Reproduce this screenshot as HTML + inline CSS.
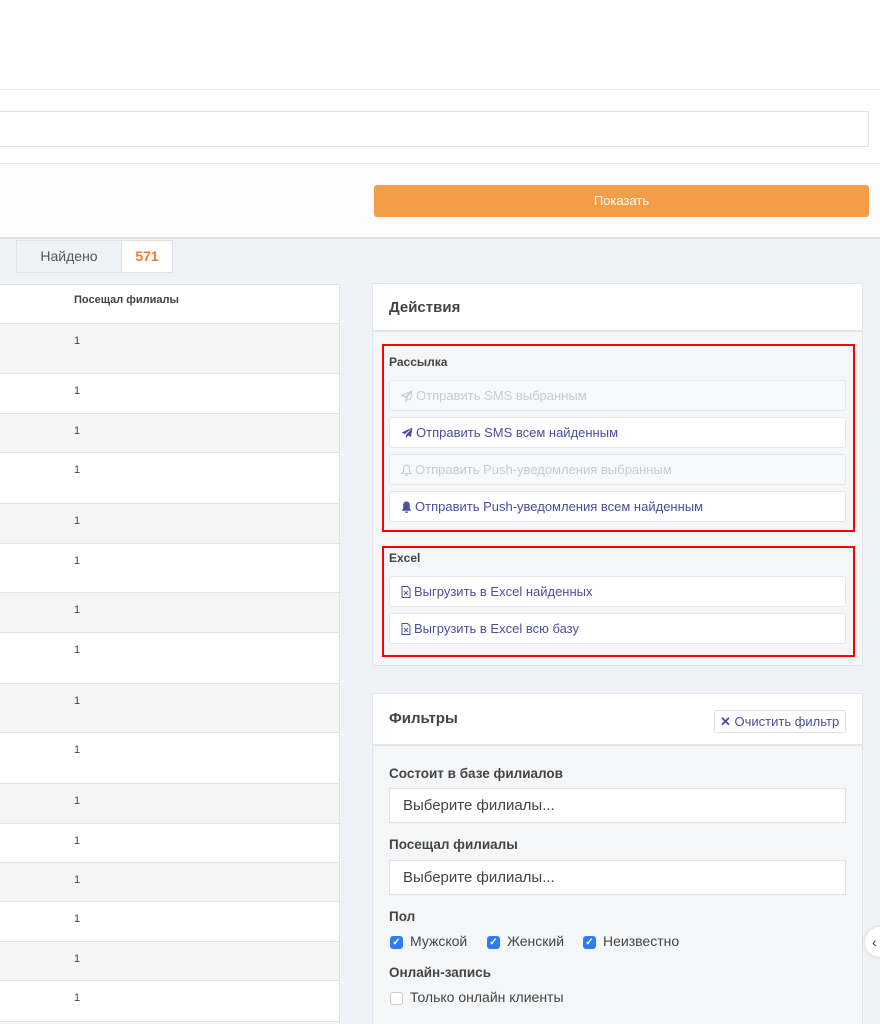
<!DOCTYPE html>
<html><head><meta charset="utf-8"><style>
*{box-sizing:border-box;margin:0;padding:0}
html,body{width:880px;height:1024px;overflow:hidden}
body{background:#eff2f7;font-family:"Liberation Sans",sans-serif;position:relative;color:#444}
.a{position:absolute}
.btn{position:absolute;left:389px;width:457px;height:31px;border:1px solid #e3e6ea;border-radius:3px;background:#fff;color:#4a4f9e;font-size:13px;padding-left:11px;line-height:29px;white-space:nowrap}
.btn svg{vertical-align:-2px;margin-right:3px}
.dis{background:#f8f9fa;color:#c8cacc}
.lbl{position:absolute;left:389px;font-weight:bold;font-size:13.5px;color:#444}
.sel{position:absolute;left:389px;width:457px;height:35px;background:#fff;border:1px solid #e0e2e5;font-size:15px;padding-left:13px;line-height:33px;color:#444}
.cb{position:absolute;width:13px;height:13px;border-radius:3px;background:#2f7df6;color:#fff;font-size:10px;line-height:13px;text-align:center;font-weight:bold}
.ck{position:absolute;font-size:14px;color:#444}
</style></head><body>
<div class="a" style="left:0;top:0;width:880px;height:238px;background:#fff"></div>
<div class="a" style="left:0;top:89px;width:880px;height:1px;background:#e6e8eb"></div>
<div class="a" style="left:-5px;top:111px;width:874px;height:36px;border:1px solid #dcdfe3;background:#fff"></div>
<div class="a" style="left:0;top:163px;width:880px;height:76px;background:#fcfcfc;border-top:1px solid #e8eaed;border-bottom:2px solid #dde1e6"></div>
<div class="a" style="left:374px;top:185px;width:495px;height:32px;background:#f49d48;border-radius:3px;color:#fff;font-size:13px;text-align:center;line-height:32px">Показать</div>

<div class="a" style="left:16px;top:240px;width:106px;height:33px;border:1px solid #dde1e6;background:#eff2f7;font-size:14px;text-align:center;line-height:31px;color:#555">Найдено</div>
<div class="a" style="left:121px;top:240px;width:52px;height:33px;border:1px solid #dde1e6;background:#fff;font-size:14px;font-weight:bold;text-align:center;line-height:31px;color:#f47a2c">571</div>

<div class="a" style="left:0;top:284px;width:340px;height:740px;background:#fff;border-right:1px solid #e0e3e7;border-top:1px solid #e0e3e7"></div>
<div class="a" style="left:74px;top:294px;font-size:11px;font-weight:bold;color:#444">Посещал филиалы</div>
<div id="rows"></div>
<script>
var t=[323,373,413,452,503,543,592,632,683,732,783,823,862,901,941,980,1021,1060];
var h='';
for(var i=0;i<t.length-1;i++){
h+='<div class="a" style="left:0;top:'+t[i]+'px;width:339px;height:'+(t[i+1]-t[i])+'px;background:'+(i%2?'#fff':'#f5f5f5')+';border-top:1px solid #e3e3e3"></div>';
h+='<div class="a" style="left:74px;top:'+(t[i]+12)+'px;font-size:11px;color:#444">1</div>';
}
document.getElementById('rows').innerHTML=h;
</script>

<div class="a" style="left:372px;top:283px;width:491px;height:383px;background:#f4f6f8;border:1px solid #e2e5e9"></div>
<div class="a" style="left:373px;top:284px;width:489px;height:48px;background:#fff;border-bottom:2px solid #e2e5e9"></div>
<div class="a" style="left:389px;top:299px;font-size:15px;font-weight:bold;color:#444">Действия</div>
<div class="a" style="left:382px;top:344px;width:473px;height:188px;border:2px solid #f00"></div>
<div class="lbl" style="top:355px;font-size:12px">Рассылка</div>
<div class="btn dis" style="top:380px"><svg width="12" height="12" viewBox="0 0 12 12"><path d="M11 1L1 5.5l3.5 1.5L11 1 5 8v3l2-2.5 2.5 1.5z" fill="none" stroke="#c8cacc" stroke-width="1"/></svg>Отправить SMS выбранным</div>
<div class="btn" style="top:417px"><svg width="12" height="12" viewBox="0 0 12 12"><path d="M11.5 0.5L0.5 5.5l3.5 1.5L11.5 0.5 5 8v3.5l2-3 3 1.5z" fill="#4a4f9e"/></svg>Отправить SMS всем найденным</div>
<div class="btn dis" style="top:454px"><svg width="11" height="12" viewBox="0 0 11 12"><path d="M5.5 1C3.5 1 2.5 2.5 2.5 4.5v3L1 9.5h9L8.5 7.5v-3C8.5 2.5 7.5 1 5.5 1zM4.3 10.5a1.2 1.2 0 0 0 2.4 0" fill="none" stroke="#c8cacc" stroke-width="1"/></svg>Отправить Push-уведомления выбранным</div>
<div class="btn" style="top:491px"><svg width="11" height="12" viewBox="0 0 11 12"><path d="M5.5 0.5C3.3 0.5 2.2 2.2 2.2 4.5v3L0.7 9.7h9.6L8.8 7.5v-3C8.8 2.2 7.7 0.5 5.5 0.5zM4 10.5a1.5 1.5 0 0 0 3 0z" fill="#4a4f9e"/></svg>Отправить Push-уведомления всем найденным</div>
<div class="a" style="left:382px;top:546px;width:473px;height:111px;border:2px solid #f00"></div>
<div class="lbl" style="top:551px;font-size:12px">Excel</div>
<div class="btn" style="top:576px"><svg width="10" height="12" viewBox="0 0 10 12"><path d="M1 .5h5.5L9 3v8.5H1z" fill="none" stroke="#4a4f9e"/><path d="M3 5l4 4M7 5L3 9" stroke="#4a4f9e" stroke-width=".9"/></svg>Выгрузить в Excel найденных</div>
<div class="btn" style="top:613px"><svg width="10" height="12" viewBox="0 0 10 12"><path d="M1 .5h5.5L9 3v8.5H1z" fill="none" stroke="#4a4f9e"/><path d="M3 5l4 4M7 5L3 9" stroke="#4a4f9e" stroke-width=".9"/></svg>Выгрузить в Excel всю базу</div>

<div class="a" style="left:372px;top:693px;width:491px;height:340px;background:#f4f6f8;border:1px solid #e2e5e9"></div>
<div class="a" style="left:373px;top:694px;width:489px;height:52px;background:#fff;border-bottom:2px solid #e2e5e9"></div>
<div class="a" style="left:389px;top:710px;font-size:15px;font-weight:bold;color:#444">Фильтры</div>
<div class="a" style="left:714px;top:710px;width:132px;height:23px;border:1px solid #dcdfe3;border-radius:3px;background:#fff;color:#4a4f9e;font-size:13px;line-height:21px;padding-left:5px"><b>✕</b> Очистить фильтр</div>
<div class="lbl" style="top:766px">Состоит в базе филиалов</div>
<div class="sel" style="top:788px">Выберите филиалы...</div>
<div class="lbl" style="top:837px">Посещал филиалы</div>
<div class="sel" style="top:860px">Выберите филиалы...</div>
<div class="lbl" style="top:909px">Пол</div>
<div class="cb" style="left:390px;top:936px">✓</div><div class="ck" style="left:410px;top:933px">Мужской</div>
<div class="cb" style="left:487px;top:936px">✓</div><div class="ck" style="left:507px;top:933px">Женский</div>
<div class="cb" style="left:583px;top:936px">✓</div><div class="ck" style="left:603px;top:933px">Неизвестно</div>
<div class="lbl" style="top:965px">Онлайн-запись</div>
<div class="a" style="left:390px;top:992px;width:13px;height:13px;border:1px solid #ccc;border-radius:3px;background:#fff"></div>
<div class="ck" style="left:410px;top:989px">Только онлайн клиенты</div>
<div class="a" style="left:865px;top:927px;width:30px;height:30px;border-radius:15px;background:#fff;box-shadow:0 0 4px rgba(0,0,0,.15);font-size:14px;line-height:30px;padding-left:7px;color:#333">‹</div>
</body></html>
